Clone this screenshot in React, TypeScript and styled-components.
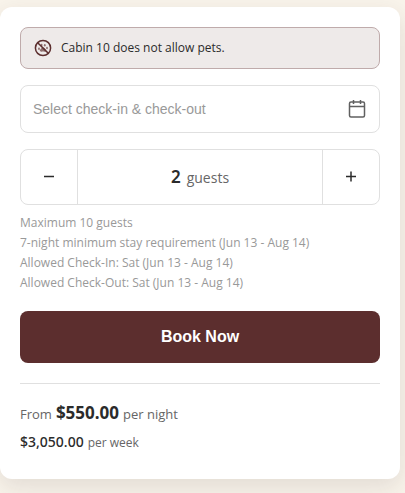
import React, { useState } from "react";
import styled, { createGlobalStyle } from "styled-components";

const GlobalStyle = createGlobalStyle`
  *, *::before, *::after { box-sizing: border-box; }
  body {
    margin: 0;
    background: #f9f4eb;
    color: #2b2b2b;
    font-family: "Segoe UI", "Open Sans", sans-serif;
  }
`;

const Page = styled.main`
  min-height: 100vh;
  padding: 7px 5px 14px 0;
  overflow: hidden;
`;

const Card = styled.section`
  display: flex;
  flex-direction: column;
  padding: 20px;
  background: #ffffff;
  border-radius: 12px;
  box-shadow: 0 8px 24px rgba(60, 40, 40, 0.12);
`;

const Notice = styled.div`
  display: flex;
  align-items: center;
  gap: 9px;
  height: 42px;
  padding: 0 13px;
  color: #2b2b2b;
  font-size: 12px;
  line-height: 16px;
  background: #eeeae9;
  border: 1px solid #bfabab;
  border-radius: 8px;
`;

const DateField = styled.label`
  display: flex;
  align-items: center;
  height: 48px;
  margin-top: 16px;
  padding: 0 12px;
  color: #606060;
  border: 1px solid #e0e0e0;
  border-radius: 8px;
`;

const DateInput = styled.input`
  flex: 1;
  min-width: 0;
  padding: 0;
  color: #2b2b2b;
  font: 14px "Liberation Sans", Arial, sans-serif;
  background: none;
  border: 0;
  outline: 0;

  &::placeholder { color: #999999; opacity: 1; }
`;

const Stepper = styled.div`
  display: flex;
  height: 56px;
  margin-top: 16px;
  border: 1px solid #e0e0e0;
  border-radius: 8px;
  overflow: hidden;
`;

const StepButton = styled.button<{ $side: "left" | "right" }>`
  display: grid;
  place-items: center;
  width: 57px;
  padding: 0;
  color: #2b2b2b;
  background: none;
  border: 0 solid #e0e0e0;
  border-${(p) => (p.$side === "left" ? "right" : "left")}-width: 1px;
  cursor: pointer;
`;

const Figure = styled.strong<{ $size: number; $weight: number }>`
  color: #2b2b2b;
  font-family: "Segoe UI", "Noto Sans", sans-serif;
  font-size: ${(p) => p.$size}px;
  font-weight: ${(p) => p.$weight};
`;

const GuestCount = styled.output`
  display: flex;
  flex: 1;
  align-items: baseline;
  justify-content: center;
  gap: 6px;
  color: #666666;
  font-size: 14px;
  line-height: 54px;
`;

const Rules = styled.ul`
  margin: 8px 0 0;
  padding: 0;
  color: #999999;
  font-size: 12px;
  line-height: 20px;
  list-style: none;
`;

const BookButton = styled.button`
  height: 52px;
  margin-top: 18px;
  color: #ffffff;
  font: bold 16px "Liberation Sans", Arial, sans-serif;
  background: #5c2e2e;
  border: 0;
  border-radius: 8px;
  cursor: pointer;
`;

const Prices = styled.div`
  margin-top: 20px;
  padding: 15px 0 2px;
  border-top: 1px solid #e0e0e0;
`;

const Price = styled.p<{ $size: number }>`
  display: flex;
  align-items: baseline;
  gap: 4px;
  margin: 0;
  color: #666666;
  font-size: ${(p) => p.$size}px;
  line-height: 28px;
`;

const NoPetsIcon = () => (
  <svg width="18" height="18" viewBox="0 0 18 18" fill="none" aria-hidden="true">
    <circle cx="9" cy="9" r="7.6" stroke="#5c2e2e" strokeWidth="1.5" />
    <g fill="#5c2e2e" opacity="0.65">
      <ellipse cx="5" cy="9.8" rx="0.9" ry="1.2" />
      <ellipse cx="7.6" cy="6" rx="0.9" ry="1.2" />
      <ellipse cx="10.8" cy="6.2" rx="0.9" ry="1.2" />
      <ellipse cx="13" cy="9" rx="0.9" ry="1.2" />
      <path d="M9 8.4c1.4 0 3.2 2 3.2 3.2 0 1-.8 1.3-1.6 1.1-1.1-.3-2.1-.3-3.2 0-.8.2-1.6-.1-1.6-1.1C5.8 10.4 7.6 8.4 9 8.4Z" />
    </g>
    <path d="M3.7 3.7 14.3 14.3" stroke="#5c2e2e" strokeWidth="1.6" />
  </svg>
);

const CalendarIcon = () => (
  <svg width="20" height="20" viewBox="0 0 20 20" fill="none" stroke="currentColor" strokeWidth="1.5" aria-hidden="true">
    <rect x="2.5" y="3" width="15" height="15" rx="1.5" />
    <path d="M2.5 7.5h15M6.5 1v4M13.5 1v4" />
  </svg>
);

const StepIcon = ({ plus }: { plus?: boolean }) => (
  <svg width="12" height="12" viewBox="0 0 12 12" fill="none" stroke="currentColor" strokeWidth="1.5" aria-hidden="true">
    <path d={plus ? "M1 5.5h10M6 .5v10" : "M1 5.5h10"} />
  </svg>
);

const rules = [
  "Maximum 10 guests",
  "7-night minimum stay requirement (Jun 13 - Aug 14)",
  "Allowed Check-In: Sat (Jun 13 - Aug 14)",
  "Allowed Check-Out: Sat (Jun 13 - Aug 14)",
];

export default function App() {
  const [guests, setGuests] = useState(2);

  return (
    <Page>
      <GlobalStyle />
      <Card>
        <Notice>
          <NoPetsIcon />
          <span>Cabin 10 does not allow pets.</span>
        </Notice>
        <DateField>
          <DateInput type="text" aria-label="Stay dates" placeholder="Select check-in & check-out" />
          <CalendarIcon />
        </DateField>
        <Stepper>
          <StepButton type="button" $side="left" aria-label="Remove guest" onClick={() => setGuests(Math.max(1, guests - 1))}>
            <StepIcon />
          </StepButton>
          <GuestCount>
            <Figure $size={17} $weight={600}>{guests}</Figure>
            <span>guests</span>
          </GuestCount>
          <StepButton type="button" $side="right" aria-label="Add guest" onClick={() => setGuests(Math.min(10, guests + 1))}>
            <StepIcon plus />
          </StepButton>
        </Stepper>
        <Rules>
          {rules.map((rule) => (
            <li key={rule}>{rule}</li>
          ))}
        </Rules>
        <BookButton type="button">Book Now</BookButton>
        <Prices>
          <Price $size={13}>
            <span>From</span>
            <Figure $size={17} $weight={700}>$550.00</Figure>
            <span>per night</span>
          </Price>
          <Price $size={12}>
            <Figure $size={14} $weight={500}>$3,050.00</Figure>
            <span>per week</span>
          </Price>
        </Prices>
      </Card>
    </Page>
  );
}
